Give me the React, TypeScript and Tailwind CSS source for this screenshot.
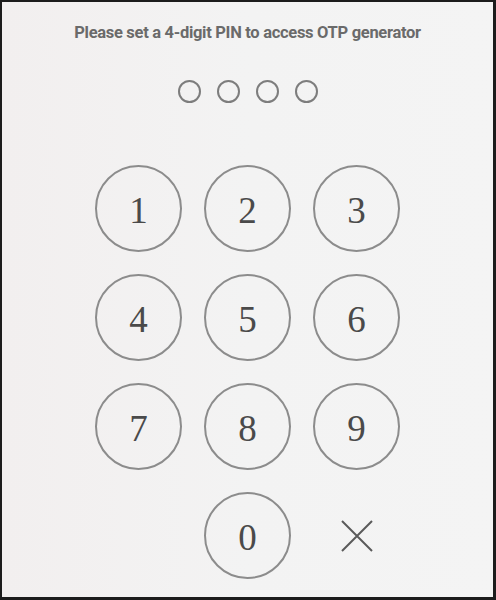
const KEYS = ["1", "2", "3", "4", "5", "6", "7", "8", "9"];

function Key({ label }: { label: string }) {
  return (
    <button
      type="button"
      className="flex h-[87px] w-[87px] items-center justify-center rounded-full border-2 border-[#8c8c8c] pt-[4px] text-[37px] leading-none text-[#4a4a4a]"
      style={{ fontFamily: '"Liberation Serif", "DejaVu Serif", serif' }}
    >
      {label}
    </button>
  );
}

export default function App() {
  return (
    <div className="h-[600px] w-[496px] border-t-2 border-r-[3px] border-b-[3px] border-l-2 border-[#1c1c1c] bg-gradient-to-r from-[#f2efef] via-[#f3f3f3] to-[#f4f4f4]">
      <div className="flex flex-col items-center pt-[21px]">
        <p
          className="text-[16.5px] font-bold leading-5 tracking-[-0.3px] text-[#6a6a6a]"
          style={{ fontFamily: 'Roboto, "Liberation Sans", sans-serif' }}
        >
          Please set a 4-digit PIN to access OTP generator
        </p>

        <div className="mt-[37px] flex gap-[16px]">
          {[0, 1, 2, 3].map((i) => (
            <span key={i} className="h-[23px] w-[23px] rounded-full border-[2.5px] border-[#7d7d7d]" />
          ))}
        </div>

        <div className="mt-[62px] grid grid-cols-[87px_87px_87px] gap-[22px]">
          {KEYS.map((k) => (
            <Key key={k} label={k} />
          ))}
          <span />
          <Key label="0" />
          <button type="button" className="flex h-[87px] w-[87px] items-center justify-center text-[#5a5a5a]">
            <svg width="32" height="32" viewBox="0 0 32 32" fill="none" stroke="currentColor" strokeWidth="2">
              <path d="M1 1 L31 31 M31 1 L1 31" />
            </svg>
          </button>
        </div>
      </div>
    </div>
  );
}
